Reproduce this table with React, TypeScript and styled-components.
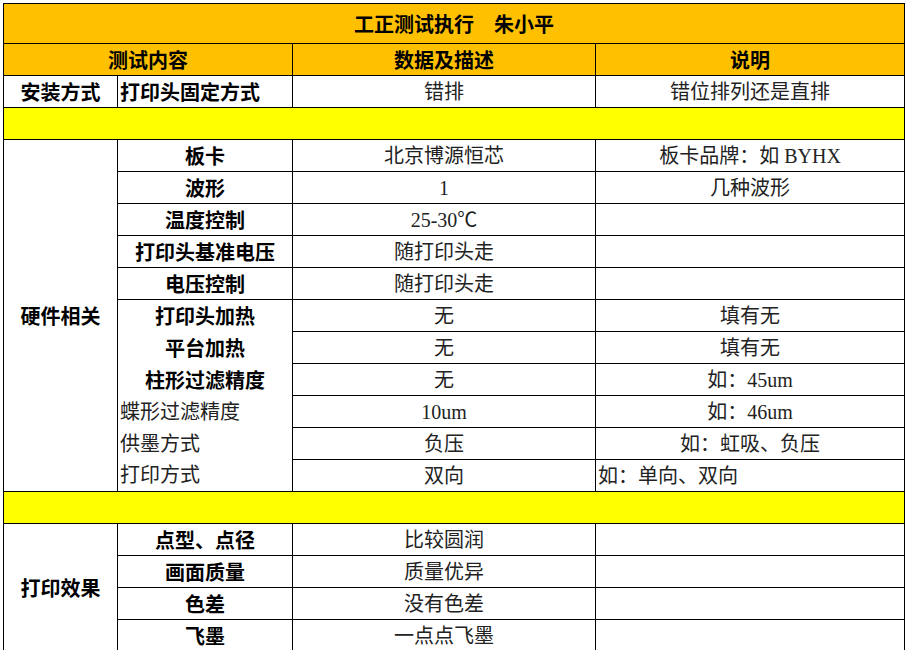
import { createGlobalStyle } from 'styled-components';
import styled from 'styled-components';

const GlobalStyle = createGlobalStyle`
  html, body {
    margin: 0;
    padding: 0;
    background: #ffffff;
  }
`;

const Page = styled.div`
  padding: 3px 0 0 3px;
  overflow: hidden;
  height: 650px;
  box-sizing: border-box;
`;

const Sheet = styled.table`
  width: 901px;
  table-layout: fixed;
  border-collapse: collapse;
  font-size: 20px;
  color: #1a1a1a;
`;

const Row = styled.tr<{ $h?: number }>`
  height: ${(p) => p.$h ?? 32}px;
`;

type Align = 'left' | 'center';

const Cell = styled.td<{
  $bg?: string;
  $bold?: boolean;
  $align?: Align;
  $openTop?: boolean;
  $openBottom?: boolean;
}>`
  border: 1px solid #000;
  ${(p) => (p.$openTop ? 'border-top: none;' : '')}
  ${(p) => (p.$openBottom ? 'border-bottom: none;' : '')}
  background: ${(p) => p.$bg ?? '#ffffff'};
  padding: 0 2px;
  line-height: 24px;
  white-space: nowrap;
  text-align: ${(p) => p.$align ?? 'center'};
  vertical-align: middle;
  font-family: ${(p) =>
    p.$bold
      ? '"Noto Sans CJK SC", "Noto Sans", sans-serif'
      : '"Liberation Serif", "Noto Sans CJK SC", serif'};
  font-weight: ${(p) => (p.$bold ? 700 : 400)};
  color: ${(p) => (p.$bold ? '#000' : '#222')};
`;

const ORANGE = '#ffc000';
const YELLOW = '#ffff00';

type Item = {
  name: string;
  bold?: boolean;
  data: string;
  note: string;
  noteLeft?: boolean;
  openTop?: boolean;
  openBottom?: boolean;
};

const hardware: Item[] = [
  { name: '板卡', bold: true, data: '北京博源恒芯', note: '板卡品牌：如 BYHX' },
  { name: '波形', bold: true, data: '1', note: '几种波形' },
  { name: '温度控制', bold: true, data: '25-30℃', note: '' },
  { name: '打印头基准电压', bold: true, data: '随打印头走', note: '' },
  { name: '电压控制', bold: true, data: '随打印头走', note: '' },
  { name: '打印头加热', bold: true, data: '无', note: '填有无', openBottom: true },
  { name: '平台加热', bold: true, data: '无', note: '填有无', openTop: true, openBottom: true },
  { name: '柱形过滤精度', bold: true, data: '无', note: '如：45um', openTop: true, openBottom: true },
  { name: '蝶形过滤精度', data: '10um', note: '如：46um', openTop: true, openBottom: true },
  { name: '供墨方式', data: '负压', note: '如：虹吸、负压', openTop: true, openBottom: true },
  { name: '打印方式', data: '双向', note: '如：单向、双向', noteLeft: true, openTop: true },
];

const effect: Item[] = [
  { name: '点型、点径', bold: true, data: '比较圆润', note: '' },
  { name: '画面质量', bold: true, data: '质量优异', note: '' },
  { name: '色差', bold: true, data: '没有色差', note: '' },
  { name: '飞墨', bold: true, data: '一点点飞墨', note: '' },
];

const Section = ({ title, items }: { title: string; items: Item[] }) => (
  <>
    {items.map((it, i) => (
      <Row key={it.name}>
        {i === 0 && (
          <Cell $bold rowSpan={items.length}>
            {title}
          </Cell>
        )}
        <Cell
          $bold={it.bold}
          $align={it.bold ? 'center' : 'left'}
          $openTop={it.openTop}
          $openBottom={it.openBottom}
        >
          {it.name}
        </Cell>
        <Cell>{it.data}</Cell>
        <Cell $align={it.noteLeft ? 'left' : 'center'}>{it.note}</Cell>
      </Row>
    ))}
  </>
);

export default function App() {
  return (
    <Page>
      <GlobalStyle />
      <Sheet>
        <colgroup>
          <col style={{ width: 114 }} />
          <col style={{ width: 175 }} />
          <col style={{ width: 303 }} />
          <col style={{ width: 309 }} />
        </colgroup>
        <tbody>
          <Row $h={40}>
            <Cell $bold $bg={ORANGE} colSpan={4}>
              工正测试执行{'\u3000'}朱小平
            </Cell>
          </Row>
          <Row>
            <Cell $bold $bg={ORANGE} colSpan={2}>
              测试内容
            </Cell>
            <Cell $bold $bg={ORANGE}>
              数据及描述
            </Cell>
            <Cell $bold $bg={ORANGE}>
              说明
            </Cell>
          </Row>
          <Row>
            <Cell $bold>安装方式</Cell>
            <Cell $bold $align="left">
              打印头固定方式
            </Cell>
            <Cell>错排</Cell>
            <Cell>错位排列还是直排</Cell>
          </Row>
          <Row>
            <Cell $bg={YELLOW} colSpan={4} />
          </Row>
          <Section title="硬件相关" items={hardware} />
          <Row>
            <Cell $bg={YELLOW} colSpan={4} />
          </Row>
          <Section title="打印效果" items={effect} />
        </tbody>
      </Sheet>
    </Page>
  );
}
